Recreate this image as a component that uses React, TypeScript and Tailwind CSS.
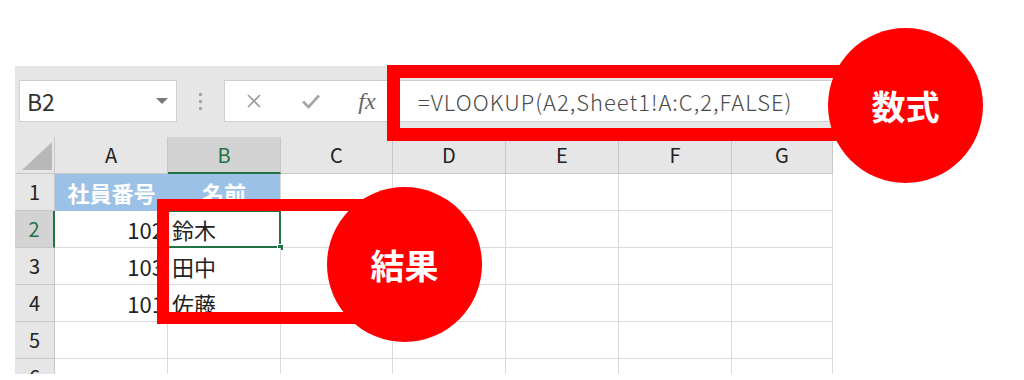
const cols = ["A", "B", "C", "D", "E", "F", "G"];

const rows: { n: number; a?: string; b?: string }[] = [
  { n: 1, a: "社員番号", b: "名前" },
  { n: 2, a: "102", b: "鈴木" },
  { n: 3, a: "103", b: "田中" },
  { n: 4, a: "101", b: "佐藤" },
  { n: 5 },
  { n: 6 },
];

function FormulaBar() {
  return (
    <div className="h-[71px] shrink-0 flex items-start pt-[14px] pl-[4px]">
      {/* name box */}
      <div className="w-[158px] h-[42px] bg-white border border-[#d0d0d0] flex items-center justify-between pl-[7px] pr-[7px]">
        <span className="text-[23px] text-[#333] leading-none">B2</span>
        <span className="w-0 h-0 border-l-[6px] border-r-[6px] border-t-[6px] border-l-transparent border-r-transparent border-t-[#7a7a7a] mr-[1px]" />
      </div>
      {/* grip dots */}
      <div className="w-[47px] h-[42px] flex flex-col items-center justify-center gap-[4px]">
        <span className="w-[3px] h-[3px] bg-[#a6a6a6]" />
        <span className="w-[3px] h-[3px] bg-[#a6a6a6]" />
        <span className="w-[3px] h-[3px] bg-[#a6a6a6]" />
      </div>
      {/* formula box */}
      <div className="flex-1 h-[42px] bg-white border border-[#d0d0d0] flex items-center">
        <div className="w-[58px] flex justify-center">
          <svg width="16" height="16" viewBox="0 0 16 16">
            <path d="M2 2 L14 14 M14 2 L2 14" stroke="#9a9a9a" strokeWidth="1.6" fill="none" />
          </svg>
        </div>
        <div className="w-[56px] flex justify-center">
          <svg width="20" height="16" viewBox="0 0 20 16">
            <path d="M2 8.5 L7.5 14 L18 2.5" stroke="#a8a8a8" strokeWidth="2.6" fill="none" />
          </svg>
        </div>
        <div className="w-[56px] flex justify-center">
          <span className="font-['Liberation_Serif',serif] italic text-[24px] text-[#666] leading-none">fx</span>
        </div>
        <span className="ml-[23px] text-[22px] font-light text-[#4a4a4a] leading-none tracking-[1px]">
          =VLOOKUP(A2,Sheet1!A:C,2,FALSE)
        </span>
      </div>
    </div>
  );
}

function Grid() {
  return (
    <div className="shrink-0 grid grid-cols-[40px_113px_113px_112px_113px_113px_113px_101px] auto-rows-[37px] text-[20px] text-[#222]">
      {/* corner */}
      <div className="bg-[#e6e6e6] border-r border-b border-[#c8c8c8] flex items-end justify-end pr-[2px] pb-[3px]">
        <svg width="30" height="28" viewBox="0 0 30 28">
          <path d="M30 0 L30 28 L0 28 Z" fill="#b8b8b8" />
        </svg>
      </div>
      {cols.map((c) =>
        c === "B" ? (
          <div
            key={c}
            className="bg-[#d3d3d3] border-r border-[#c8c8c8] border-b-2 border-b-[#217346] flex items-center justify-center text-[#217346]"
          >
            {c}
          </div>
        ) : (
          <div key={c} className="bg-[#e6e6e6] border-r border-b border-[#c8c8c8] flex items-center justify-center">
            {c}
          </div>
        )
      )}
      {rows.map((r) => (
        <>
          <div
            key={`h${r.n}`}
            className={
              r.n === 2
                ? "bg-[#d3d3d3] border-b border-[#c8c8c8] border-r-2 border-r-[#217346] flex items-center justify-center text-[#217346]"
                : "bg-[#e6e6e6] border-r border-b border-[#c8c8c8] flex items-center justify-center"
            }
          >
            {r.n}
          </div>
          {r.n === 1 ? (
            <>
              <div className="bg-[#9bc2e6] text-white text-[22px] font-bold flex items-center justify-center">{r.a}</div>
              <div className="bg-[#9bc2e6] text-white text-[22px] font-bold flex items-center justify-center border-r border-[#dadada]">
                {r.b}
              </div>
            </>
          ) : (
            <>
              <div className="bg-white border-r border-b border-[#dadada] flex items-center justify-end pr-[3px] text-[22px]">
                {r.a}
              </div>
              <div className="relative bg-white border-r border-b border-[#dadada] flex items-center pl-[4px] text-[22px]">
                {r.b}
                {r.n === 2 && (
                  <>
                    <div className="absolute -left-[1px] -top-[1px] -right-[1px] -bottom-[1px] border-2 border-[#217346]" />
                    <div className="absolute -right-[4px] -bottom-[4px] w-[7px] h-[7px] bg-[#217346] border border-white" />
                  </>
                )}
              </div>
            </>
          )}
          {cols.slice(2).map((c) => (
            <div key={`${c}${r.n}`} className="bg-white border-r border-b border-[#dadada]" />
          ))}
        </>
      ))}
    </div>
  );
}

export default function App() {
  return (
    <div className="relative w-[1024px] h-[380px] bg-white overflow-hidden font-['Noto_Sans_CJK_JP',sans-serif]">
      <div className="ml-[15px] mt-[66px] w-[818px] h-[308px] bg-[#e6e6e6] flex flex-col overflow-hidden">
        <FormulaBar />
        <Grid />
      </div>

      {/* annotations */}
      <div className="absolute left-[387px] top-[65px] w-[483px] h-[76px] border-[13px] border-[#ff0000]" />
      <div className="absolute left-[828px] top-[28px] w-[155px] h-[155px] rounded-full bg-[#ff0000] flex items-center justify-center">
        <span className="text-white font-bold text-[34px] leading-none">数式</span>
      </div>
      <div className="absolute left-[157px] top-[199px] w-[220px] h-[125px] border-[12px] border-[#ff0000]" />
      <div className="absolute left-[327px] top-[187px] w-[155px] h-[155px] rounded-full bg-[#ff0000] flex items-center justify-center">
        <span className="text-white font-bold text-[34px] leading-none">結果</span>
      </div>
    </div>
  );
}
